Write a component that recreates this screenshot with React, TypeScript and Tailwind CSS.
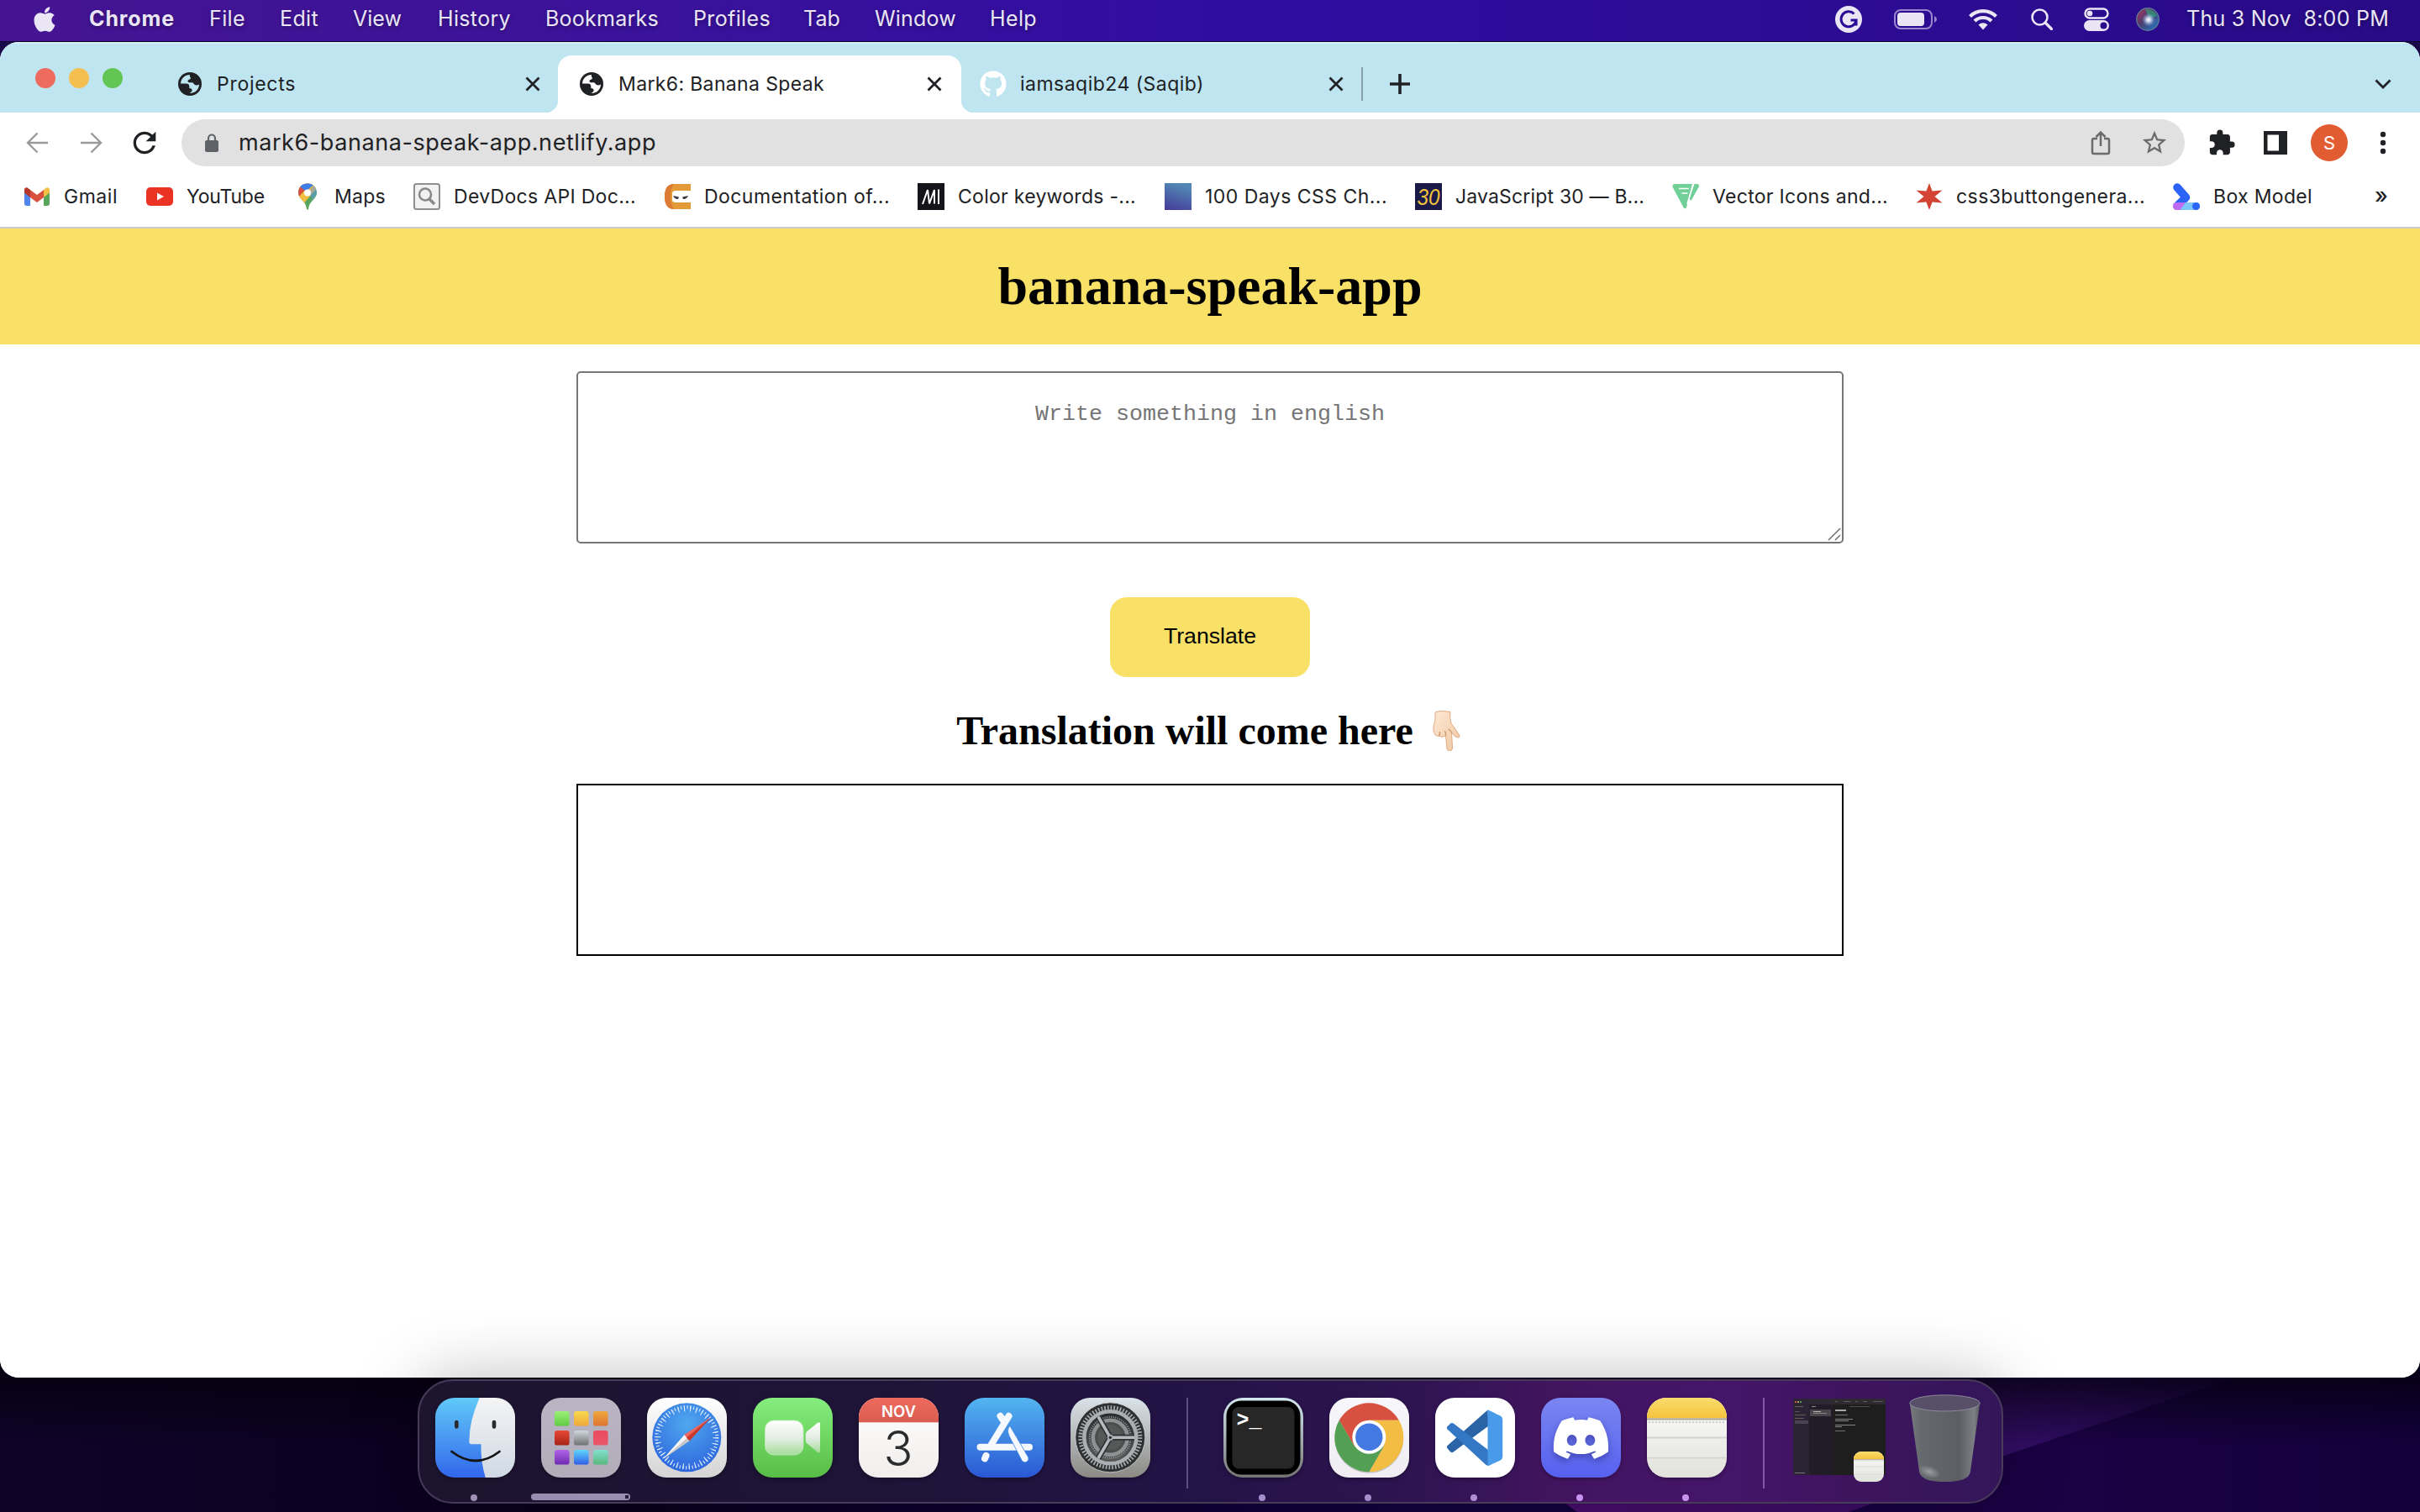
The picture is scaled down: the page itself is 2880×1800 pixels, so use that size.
import { useLayoutEffect, useRef, useState, type ReactNode } from "react";
import { FaApple, FaGithub } from "react-icons/fa";
import { FaDiscord } from "react-icons/fa6";
import { MdStarBorder, MdExtension, MdRefresh } from "react-icons/md";

/* A one-line label whose tracking is adjusted so that it fills its box. */
function Label({ className, children }: { className: string; children: string }) {
  const outer = useRef<HTMLSpanElement>(null);
  const inner = useRef<HTMLSpanElement>(null);
  const [spacing, setSpacing] = useState(0);
  useLayoutEffect(() => {
    if (!outer.current || !inner.current) return;
    const free = outer.current.clientWidth - inner.current.getBoundingClientRect().width;
    setSpacing(free / children.length);
  }, [children]);
  return (
    <span className={"block shrink-0 whitespace-pre " + className}>
      <span ref={outer} className="block w-full">
        <span ref={inner} style={{ letterSpacing: spacing }}>
          {children}
        </span>
      </span>
    </span>
  );
}

/* ---------- Menu bar ---------- */

function MenuBar() {
  return (
    <header className="flex h-[50px] shrink-0 items-start border-b border-[#0b0326] bg-linear-to-r from-[#451492] via-[#300da2] to-[#290a86] font-['Inter',sans-serif] text-[25px] text-[#eae6f5]">
      <div className="flex h-[46px] w-full items-center [text-shadow:0_2px_4px_rgba(0,0,0,0.35)]">
        <FaApple className="ml-[37px] h-[34px] w-[32px] shrink-0" />
        <Label className="ml-[37px] w-[102px] font-bold">Chrome</Label>
        <Label className="ml-[41px] w-[43px]">File</Label>
        <Label className="ml-[41px] w-[46px]">Edit</Label>
        <Label className="ml-[41px] w-[58px]">View</Label>
        <Label className="ml-[43px] w-[87px]">History</Label>
        <Label className="ml-[41px] w-[135px]">Bookmarks</Label>
        <Label className="ml-[41px] w-[92px]">Profiles</Label>
        <Label className="ml-[39px] w-[44px]">Tab</Label>
        <Label className="ml-[41px] w-[97px]">Window</Label>
        <Label className="ml-[40px] w-[56px]">Help</Label>
        <div className="ml-auto flex items-center pr-[37px]">
          <svg className="h-8 w-8" viewBox="0 0 32 32">
            <circle cx="16" cy="16" r="16" fill="#e9e5f4" />
            <path d="M22.5 9.5A9 9 0 1 0 25 17H18.5M25 17v6.500M25 17" fill="none" stroke="#2b0b95" strokeWidth="3" />
          </svg>
          <svg className="ml-[38px] h-[24px] w-[52px]" viewBox="0 0 52 24">
            <rect x="1" y="1" width="44" height="22" rx="7" fill="none" stroke="#9a86cc" strokeWidth="2" />
            <rect x="4" y="4" width="32" height="16" rx="4" fill="#e9e5f4" />
            <path d="M48 8q3 1.500 3 4t-3 4z" fill="#9a86cc" />
          </svg>
          <svg className="ml-[37px] h-[26px] w-[34px]" viewBox="0 0 34 26">
            <g fill="none" stroke="#e9e5f4" strokeWidth="4.200">
              <path d="M1.500 9.500a22 22 0 0 1 31 0" />
              <path d="M7 15a14.500 14.500 0 0 1 20 0" />
            </g>
            <path d="M11.500 19.500a8 8 0 0 1 11 0L17 25.500z" fill="#e9e5f4" />
          </svg>
          <svg className="ml-[40px] h-[26px] w-[26px]" viewBox="0 0 26 26">
            <circle cx="10.500" cy="10.500" r="9" fill="none" stroke="#e9e5f4" strokeWidth="2.600" />
            <path d="M17 17l7.500 7.500" stroke="#e9e5f4" strokeWidth="3.200" strokeLinecap="round" />
          </svg>
          <svg className="ml-[37px] h-[28px] w-[30px]" viewBox="0 0 30 28">
            <rect x="1.500" y="1.500" width="27" height="11" rx="5.500" fill="none" stroke="#e9e5f4" strokeWidth="2.400" />
            <circle cx="7" cy="7" r="3.300" fill="#e9e5f4" />
            <rect x="0" y="15" width="30" height="13" rx="6.500" fill="#e9e5f4" />
            <circle cx="23.500" cy="21.500" r="4" fill="#2a0a8a" />
          </svg>
          <svg className="ml-[32px] h-[28px] w-[28px]" viewBox="0 0 28 28">
            <defs>
              <linearGradient id="siri" x1="0" y1="0" x2="1" y2="1">
                <stop offset="0" stopColor="#b5305a" />
                <stop offset="0.450" stopColor="#4a3f6e" />
                <stop offset="1" stopColor="#1f7fd0" />
              </linearGradient>
              <radialGradient id="siriGlow">
                <stop offset="0" stopColor="#ffffff" />
                <stop offset="0.350" stopColor="#dfe8ff" stopOpacity="0.800" />
                <stop offset="1" stopColor="#7fa0e0" stopOpacity="0" />
              </radialGradient>
            </defs>
            <circle cx="14" cy="14" r="13.300" fill="url(#siri)" stroke="#5c7f96" strokeWidth="1.200" />
            <path d="M11 2q10-1 14 8l-9 3z" fill="#2f9a78" opacity="0.750" />
            <circle cx="15" cy="14.500" r="8" fill="url(#siriGlow)" />
          </svg>
          <Label className="ml-[32px] w-[241px]">{"Thu 3 Nov  8:00 PM"}</Label>
        </div>
      </div>
    </header>
  );
}

/* ---------- Browser chrome ---------- */

function CloseIcon() {
  return (
    <svg className="h-[18px] w-[18px] shrink-0" viewBox="0 0 18 18">
      <path d="M1.500 1.500l15 15M16.500 1.500l-15 15" stroke="#202124" strokeWidth="2.800" />
    </svg>
  );
}

function Globe({ land }: { land: string }) {
  return (
    <svg className="size-[28px] shrink-0" viewBox="0 0 28 28">
      <circle cx="14" cy="14" r="14" fill="#202124" />
      <path
        className={land}
        d="M14 3C8 3 3.300 7.500 3 13.500h6.500c2.500 0 3.800 1.200 3.800 3.300v2.200c2.400 0 3.300 1 3.300 2.500 0 1.600-1.600 2.300-3.100 3.400C20 25.300 25 20.500 25 14.500c-1.800 1-3.500 1.300-5 .500-1.600-.800-1.800-2.700-3.500-2.700h-3.200c-1.600 0-2.300-1.500-1.500-2.700.800-1 2.500-.700 3-2 .5-1.600-1.800-2.300-.800-4.600z"
      />
    </svg>
  );
}

function TabStrip() {
  return (
    <div className="flex h-[84px] shrink-0 items-end border-t-2 border-[#d6f0f7] bg-[#bfe6f0] text-[23px]">
      <div className="flex h-[68px] w-[649px] shrink-0 items-center">
        <div className="mb-[14px] ml-[42px] flex gap-4">
          <span className="size-6 rounded-full bg-[#ed6b5f]" />
          <span className="size-6 rounded-full bg-[#f5bf4f]" />
          <span className="size-6 rounded-full bg-[#62c554]" />
        </div>
        <div className="mr-[18px] ml-[66px]">
          <Globe land="fill-[#bfe6f0]" />
        </div>
        <Label className="w-[94px]">Projects</Label>
        <div className="mr-[6px] ml-auto">
          <CloseIcon />
        </div>
      </div>
      <div className="h-[68px] w-[15px] shrink-0 bg-[radial-gradient(circle_at_0_0,#bfe6f0_15px,#ffffff_15.500px)] bg-[length:15px_15px] bg-bottom bg-no-repeat" />
      <div className="flex h-[68px] w-[480px] shrink-0 items-center rounded-t-[16px] bg-white">
        <div className="mr-[18px] ml-[26px]">
          <Globe land="fill-white" />
        </div>
        <Label className="w-[245px]">Mark6: Banana Speak</Label>
        <div className="mr-[23px] ml-auto">
          <CloseIcon />
        </div>
      </div>
      <div className="h-[68px] w-[15px] shrink-0 bg-[radial-gradient(circle_at_100%_0,#bfe6f0_15px,#ffffff_15.500px)] bg-[length:15px_15px] bg-bottom bg-no-repeat" />
      <div className="flex h-[68px] flex-1 items-center">
        <FaGithub className="ml-[7px] size-8 shrink-0 text-white" />
        <Label className="ml-4 w-[219px]">iamsaqib24 (Saqib)</Label>
        <div className="ml-[148px]">
          <CloseIcon />
        </div>
        <span className="ml-[21px] h-[40px] w-[2px] bg-[#86a1a9]" />
        <svg className="ml-[32px] size-6" viewBox="0 0 24 24">
          <path d="M12 0v24M0 12h24" stroke="#202124" strokeWidth="3.600" />
        </svg>
        <svg className="mr-[34px] ml-auto h-[12px] w-[20px]" viewBox="0 0 20 12">
          <path d="M1.500 1.500l8.500 8.500 8.500-8.500" fill="none" stroke="#202124" strokeWidth="2.800" />
        </svg>
      </div>
    </div>
  );
}

function Toolbar() {
  return (
    <div className="flex h-[72px] shrink-0 items-center">
      <svg className="ml-[31px] h-[26px] w-[27px] shrink-0" viewBox="0 0 27 26">
        <path d="M26 13H2M13.500 1.500L2 13l11.500 11.500" fill="none" stroke="#9a9a9a" strokeWidth="2.400" />
      </svg>
      <svg className="ml-[37px] h-[26px] w-[27px] shrink-0" viewBox="0 0 27 26">
        <path d="M1 13h24M13.500 1.500L25 13 13.500 24.500" fill="none" stroke="#9a9a9a" strokeWidth="2.400" />
      </svg>
      <MdRefresh className="ml-[30px] size-[40px] shrink-0" />
      <div className="ml-[24px] flex h-[56px] w-[2384px] shrink-0 items-center rounded-full bg-[#e1e1e1] text-[27px]">
        <svg className="ml-[28px] h-[22px] w-[16px] shrink-0" viewBox="0 0 16 22">
          <path d="M4 9V5.500a4 4 0 0 1 8 0V9" fill="none" stroke="#5f6368" strokeWidth="2.200" />
          <rect y="8" width="16" height="14" rx="2" fill="#5f6368" />
        </svg>
        <Label className="mt-[1px] ml-[24px] w-[497px]">mark6-banana-speak-app.netlify.app</Label>
        <svg className="ml-auto h-[30px] w-[24px]" viewBox="0 0 24 30">
          <path d="M8 10H4a2 2 0 0 0-2 2v14a2 2 0 0 0 2 2h16a2 2 0 0 0 2-2V12a2 2 0 0 0-2-2h-4M12 19V3M6.500 8L12 2.500 17.500 8" fill="none" stroke="#6b6b6b" strokeWidth="2.500" />
        </svg>
        <MdStarBorder className="mr-[19px] ml-[35px] size-[34px] text-[#6b6b6b]" />
      </div>
      <MdExtension className="ml-[27px] size-[34px] shrink-0" />
      <svg className="ml-[33px] size-[28px] shrink-0" viewBox="0 0 28 28">
        <path fillRule="evenodd" d="M0 0h28v28H0zM4.500 4.500v19H18v-19z" fill="#202124" />
      </svg>
      <span className="ml-[28px] flex size-[44px] shrink-0 items-center justify-center rounded-full bg-[#e25c32] text-[22px] text-white">S</span>
      <svg className="ml-[38px] h-[28px] w-[8px] shrink-0" viewBox="0 0 8 28">
        <circle cx="4" cy="4" r="3.200" fill="#202124" />
        <circle cx="4" cy="14" r="3.200" fill="#202124" />
        <circle cx="4" cy="24" r="3.200" fill="#202124" />
      </svg>
    </div>
  );
}

const icons: Record<string, ReactNode> = {
  gmail: (
    <>
      <path d="M1 8v16a3 3 0 0 0 3 3h4V13z" fill="#4f86ec" />
      <path d="M31 8v16a3 3 0 0 1-3 3h-4V13z" fill="#58a55c" />
      <path d="M24 8l3-2.200c2-1.200 4 0 4 2.200v3.500L24 17z" fill="#f2be42" />
      <path d="M8 8L5 5.800C3 4.600 1 5.800 1 8v3.500L8 17z" fill="#b7362b" />
      <path d="M8 8v9l8 6 8-6V8l-8 6z" fill="#da5040" />
    </>
  ),
  youtube: (
    <>
      <rect y="5" width="32" height="22" rx="5" fill="#ea3323" />
      <path d="M13 11.500v9l8-4.500z" fill="#fff" />
    </>
  ),
  maps: (
    <>
      <clipPath id="pin">
        <path d="M16 .500C9.500.500 5 5 5 11.500c0 7.500 9 9.500 9.800 18.500.2 2 2.200 2 2.400 0C18 21 27 19 27 11.500 27 5 22.500.500 16 .500z" />
      </clipPath>
      <g clipPath="url(#pin)">
        <rect width="32" height="32" fill="#58a55c" />
        <path d="M0 22L20 0h12L10 26z" fill="#f2be42" />
        <path d="M5 0h15L4 18z" fill="#da5040" />
        <path d="M7 4l7 6L22 3 30 0H8z" fill="#3f7ee8" />
        <path d="M16 11L24 2l8 0v6l-10 12z" fill="#5b95ee" opacity="0.500" />
      </g>
      <circle cx="16" cy="11.500" r="4" fill="#fff" />
    </>
  ),
  devdocs: (
    <>
      <rect x="1" y="1" width="30" height="30" rx="2.500" fill="#f2f2f2" stroke="#8f8f8f" strokeWidth="2" />
      <circle cx="14" cy="13.500" r="7" fill="none" stroke="#8a8a8a" strokeWidth="2.600" />
      <path d="M18.500 18.500l6.500 6.500" stroke="#8a8a8a" strokeWidth="3.500" />
    </>
  ),
  ninja: (
    <>
      <path d="M32 1H12C5 1 1 6 1 16s4 15 11 15h20v-8H14q-4 0-4-3.500v-7Q10 9 14 9h18z" fill="#e59a3a" />
      <path d="M12 1C5 1 1 6 1 16s4 15 11 15q-4-6-4-15t4-15z" fill="#dd7a33" />
      <path d="M11 15l7 1.500-1 2.500q-4 .500-6-4zM29 15l-7 1.500 1 2.500q4 .500 6-4z" fill="#3a3a42" />
    </>
  ),
  mdn: (
    <>
      <rect width="32" height="32" fill="#15141a" />
      <path d="M6 25L12 8l2 16.500L20 8v16.500M25 7.500v17.500" fill="none" stroke="#fff" strokeWidth="2" />
    </>
  ),
  days: (
    <>
      <defs>
        <linearGradient id="days" x1="0.300" y1="0" x2="0" y2="1">
          <stop offset="0" stopColor="#5286b4" />
          <stop offset="1" stopColor="#453a98" />
        </linearGradient>
      </defs>
      <rect width="32" height="32" fill="url(#days)" />
    </>
  ),
  thirty: (
    <>
      <rect width="32" height="32" fill="#1b1947" />
      <text x="16" y="26" fontSize="28" fontStyle="italic" fontFamily="Liberation Sans, sans-serif" textAnchor="middle" textLength="27" lengthAdjust="spacingAndGlyphs" fill="#efc23c">
        30
      </text>
    </>
  ),
  vector: (
    <>
      <path d="M3 1H24L17 29q-1.500 2.500-3.500 0L.500 4.500Q0 1 3 1z" fill="#71cf98" />
      <path d="M26.500 1H30q2.500.500 2 3L22.500 21 20 18z" fill="#71cf98" />
      <path d="M8 6.500h12M11.500 12h7M25.500 0L18 25" stroke="#fff" strokeWidth="1.700" />
    </>
  ),
  star: <path d="M16 0l3.600 9.500L31.500 8.500 22.500 16l9 7.500-11.900-1L16 32l-3.600-9.500L.500 23.500l9-7.500-9-7.500 11.900 1z" fill="#d24333" />,
  box: (
    <>
      <path d="M5 5l10.500 12L5 27" fill="none" stroke="#2b63f6" strokeWidth="9.500" strokeLinecap="round" strokeLinejoin="round" />
      <rect y="23" width="32" height="9" rx="4.500" fill="#7cc8f8" />
      <path d="M4.500 23H15l-6.500 9h-4a4.500 4.500 0 0 1 0-9z" fill="#bd6cf2" />
      <circle cx="27.500" cy="27.500" r="4.500" fill="#2b63f6" />
    </>
  ),
};

const bookmarks = [
  { icon: "gmail", label: "Gmail", item: "w-[146px]", text: "w-[64px]" },
  { icon: "youtube", label: "YouTube", item: "w-[176px]", text: "w-[93px]" },
  { icon: "maps", label: "Maps", item: "w-[142px]", text: "w-[61px]" },
  { icon: "devdocs", label: "DevDocs API Doc...", item: "w-[298px]", text: "w-[217px]" },
  { icon: "ninja", label: "Documentation of...", item: "w-[302px]", text: "w-[221px]" },
  { icon: "mdn", label: "Color keywords -...", item: "w-[294px]", text: "w-[212px]" },
  { icon: "days", label: "100 Days CSS Ch...", item: "w-[298px]", text: "w-[217px]" },
  { icon: "thirty", label: "JavaScript 30 — B...", item: "w-[306px]", text: "w-[225px]" },
  { icon: "vector", label: "Vector Icons and...", item: "w-[290px]", text: "w-[209px]" },
  { icon: "star", label: "css3buttongenera...", item: "w-[306px]", text: "w-[225px]" },
  { icon: "box", label: "Box Model", item: "w-[240px]", text: "w-[118px]" },
];

function BookmarksBar() {
  return (
    <div className="flex h-[66px] shrink-0 items-start border-b-2 border-[#cbcbcb] pl-[28px] text-[23px]">
      <div className="flex h-[56px] items-center">
        {bookmarks.map((b) => (
          <div key={b.icon} className={"flex shrink-0 items-center gap-4 " + b.item}>
            <svg className="size-8 shrink-0" viewBox="0 0 32 32">
              {icons[b.icon]}
            </svg>
            <Label className={b.text}>{b.label}</Label>
          </div>
        ))}
        <span className="-mt-[2px] text-[26px] leading-none font-medium">»</span>
      </div>
    </div>
  );
}

/* ---------- Page ---------- */

function PointingHand() {
  return (
    <svg className="h-[48px] w-[48px]" viewBox="0 0 48 48">
      <defs>
        <linearGradient id="skin" x1="0" y1="0" x2="1" y2="1">
          <stop offset="0" stopColor="#fde9d4" />
          <stop offset="1" stopColor="#f0c6a2" />
        </linearGradient>
      </defs>
      <path
        d="M14 2Q19-.500 32 1.500Q31 9 33 15Q38 22 42.500 29Q44 32 41 32Q37 31.500 33.500 26L34.500 45Q34 48 31 48Q28.500 48 28 45L26.500 30Q22 32.500 18.500 30Q14 31 13 26.500Q11.500 24 12 19Q15 11 14 2Z"
        fill="url(#skin)"
        stroke="#dfa980"
        strokeWidth="1"
      />
      <path d="M18.500 30q1.500-2 1-5M26.500 30q.500-3-1-6M33.500 26q-1.500-3-4-4" fill="none" stroke="#cf946a" strokeWidth="1.300" />
    </svg>
  );
}

function BananaPage() {
  return (
    <main className="flex flex-1 flex-col items-center bg-white text-black">
      <h1 className="w-full bg-[#f9e066] py-8 text-center font-['Liberation_Serif',serif] text-[64px] leading-[74px] font-bold">banana-speak-app</h1>
      <div className="relative mt-8 h-[205px] w-[1508px]">
        <textarea
          className="h-full w-full resize-none rounded-[5px] border-2 border-[#767676] p-8 pt-[33px] text-center font-['Liberation_Mono',monospace] text-[26.670px] leading-[32px] placeholder:text-[#757575]"
          placeholder="Write something in english"
        />
        <svg className="absolute right-[3px] bottom-[3px] size-[16px]" viewBox="0 0 16 16">
          <path d="M1 15L15 1M9 15l6-6" stroke="#6e6e6e" strokeWidth="1.500" />
        </svg>
      </div>
      <button className="mt-[64px] h-[95px] w-[238px] rounded-[20px] bg-[#f9e066] pb-[3px] font-['Liberation_Sans',sans-serif] text-[26.670px]">Translate</button>
      <h2 className="mt-[36px] flex h-[56px] items-center gap-[12px] font-['Liberation_Serif',serif] text-[48px] leading-[56px] font-bold">
        Translation will come here
        <PointingHand />
      </h2>
      <div className="mt-[35px] h-[205px] w-[1508px] border-2 border-black" />
    </main>
  );
}

/* ---------- Dock ---------- */

function Svg({ children }: { children: ReactNode }) {
  return (
    <svg className="size-[95px]" viewBox="0 0 95 95">
      {children}
    </svg>
  );
}

function Gradient({ id, from, to }: { id: string; from: string; to: string }) {
  return (
    <linearGradient id={id} x1="0" y1="0" x2="0" y2="1">
      <stop offset="0" stopColor={from} />
      <stop offset="1" stopColor={to} />
    </linearGradient>
  );
}

function Finder() {
  return (
    <Svg>
      <Gradient id="fBlue" from="#60caf8" to="#3267ec" />
      <Gradient id="fWhite" from="#f4f4f5" to="#d0d9e4" />
      <path d="M0 0h60v95H0z" fill="url(#fBlue)" />
      <path d="M52.700 0Q40.500 27 40.300 52q0 3.300 3 3.300h11.200Q54 76 59.700 95H95V0z" fill="url(#fWhite)" />
      <path d="M25.300 29v5.500M70 29v5.500" stroke="#2a2a2c" strokeWidth="4.600" strokeLinecap="round" />
      <path d="M19.500 64Q48 86 76.500 64" fill="none" stroke="#141416" strokeWidth="2.800" strokeLinecap="round" />
    </Svg>
  );
}

const tiles = [
  ["#9df07a", "#5ecb40"],
  ["#f8d84e", "#f0a83a"],
  ["#eea83c", "#dd7433"],
  ["#e84a35", "#a62217"],
  ["#cfd9e0", "#707070"],
  ["#ec4a5e", "#e9566a"],
  ["#b063e6", "#6e2bb0"],
  ["#5fd6fa", "#2f5ee8"],
  ["#84e0d0", "#56b87c"],
];

function Launchpad() {
  return (
    <Svg>
      <Gradient id="lp" from="#b9b5c3" to="#b0acb8" />
      <rect width="95" height="95" fill="url(#lp)" />
      {tiles.map(([from, to], i) => (
        <g key={i}>
          <Gradient id={"tile" + i} from={from} to={to} />
          <rect x={16 + (i % 3) * 23} y={16 + Math.floor(i / 3) * 23} width="17.600" height="17.600" rx="3.200" fill={"url(#tile" + i + ")"} />
        </g>
      ))}
    </Svg>
  );
}

function Safari() {
  return (
    <Svg>
      <Gradient id="sfBg" from="#ffffff" to="#d4d4d4" />
      <radialGradient id="sfBlue" cx="0.500" cy="0.300" r="0.750">
        <stop offset="0" stopColor="#4fa8ee" />
        <stop offset="1" stopColor="#2c62dc" />
      </radialGradient>
      <rect width="95" height="95" fill="url(#sfBg)" />
      <circle cx="47.300" cy="47.300" r="41" fill="url(#sfBlue)" />
      <circle cx="47.300" cy="47.300" r="36" fill="none" stroke="#dcecfb" strokeWidth="4" strokeDasharray="1.100 2.670" />
      <circle cx="47.300" cy="47.300" r="34.500" fill="none" stroke="#dcecfb" strokeWidth="7" strokeDasharray="1.100 6.127" />
      <path d="M19 73L45 43.500l5.500 7z" fill="#f6f6f6" />
      <path d="M19 73l28.500-25 3.500 3z" fill="#c9c9c9" />
      <path d="M76.500 23L44.500 44l3 4z" fill="#f0665a" />
      <path d="M76.500 23L50.500 51.500l-3.500-4z" fill="#c93a2e" />
    </Svg>
  );
}

function FaceTime() {
  return (
    <Svg>
      <Gradient id="ftBg" from="#86ee7e" to="#57bd46" />
      <linearGradient id="ftCam" x1="0" y1="0" x2="0" y2="1">
        <stop offset="0" stopColor="#ffffff" />
        <stop offset="0.550" stopColor="#e0ecdf" />
        <stop offset="1" stopColor="#a4dd9a" />
      </linearGradient>
      <rect width="95" height="95" fill="url(#ftBg)" />
      <rect x="14.500" y="27" width="45.500" height="41" rx="10.500" fill="url(#ftCam)" stroke="#c5edbe" strokeWidth="0.800" />
      <path d="M64.500 40L77 29.800q3-1.800 3 1.500v32q0 3.300-3 1.500L64.500 54.500q-1.700-1.500-1.700-3.500v-7.500q0-2 1.700-3.500z" fill="url(#ftCam)" />
    </Svg>
  );
}

function Calendar() {
  return (
    <Svg>
      <Gradient id="calRed" from="#ef6a5e" to="#d95c50" />
      <Gradient id="calPaper" from="#ffffff" to="#f0eeec" />
      <rect width="95" height="95" fill="url(#calPaper)" />
      <rect width="95" height="29.300" fill="url(#calRed)" />
      <text x="47.500" y="22.800" textAnchor="middle" fontFamily="Inter, sans-serif" fontWeight="600" fontSize="18.500" textLength="41" fill="#fff">
        NOV
      </text>
      <text x="47" y="80.700" textAnchor="middle" fontFamily="Inter, sans-serif" fontWeight="300" fontSize="58" textLength="35" lengthAdjust="spacingAndGlyphs" fill="#2c2c2e">
        3
      </text>
    </Svg>
  );
}

function AppStore() {
  return (
    <Svg>
      <Gradient id="asBg" from="#53b5f0" to="#2a57d4" />
      <rect width="95" height="95" fill="url(#asBg)" />
      <g stroke="#f5f9ff" strokeWidth="8" strokeLinecap="round" fill="none">
        <path d="M42.500 21.800L46 27" />
        <path d="M52.500 21.800L31.500 56" />
        <path d="M25.500 69L24 72.300" />
        <path d="M18.500 58.700H77" />
      </g>
      <path d="M54 33.500q-4.500 4-1 12L68 74.500a4.200 4.200 0 0 0 7.500-4z" fill="#f5f9ff" stroke="#3b80e4" strokeWidth="0.800" />
    </Svg>
  );
}

function Settings() {
  return (
    <Svg>
      <Gradient id="stBg" from="#dae3ea" to="#8b8984" />
      <Gradient id="stDark" from="#26292b" to="#5a5b5b" />
      <rect width="95" height="95" fill="url(#stBg)" />
      <circle cx="47.300" cy="47.300" r="41.500" fill="#2e3031" stroke="#d5d7d8" strokeWidth="0.800" />
      <circle cx="47.300" cy="47.300" r="35.500" fill="none" stroke="#a9adaf" strokeWidth="5" strokeDasharray="1.700 2.018" />
      <circle cx="47.300" cy="47.300" r="31" fill="url(#stDark)" stroke="#a9afb2" strokeWidth="4.500" />
      <circle cx="47.300" cy="47.300" r="24.500" fill="none" stroke="#8f9294" strokeWidth="2" strokeDasharray="1.200 1.366" />
      <circle cx="47.300" cy="47.300" r="20.500" fill="#4c4e4e" stroke="#8e9192" strokeWidth="4.500" />
      <circle cx="47.300" cy="47.300" r="15" fill="#565857" />
      <path d="M47.300 47.300H76M47.300 47.300L33 22.500M47.300 47.300L33 72" stroke="#2f3132" strokeWidth="7" />
      <path d="M47.300 47.300H76M47.300 47.300L33 22.500M47.300 47.300L33 72" stroke="#b4babd" strokeWidth="3.600" />
      <circle cx="47.300" cy="47.300" r="3.600" fill="#a5abae" />
      <circle cx="47.300" cy="47.300" r="1.600" fill="#222" />
    </Svg>
  );
}

function Terminal() {
  return (
    <Svg>
      <Gradient id="tmBg" from="#d3e8ee" to="#757575" />
      <rect width="95" height="95" fill="url(#tmBg)" />
      <rect x="3.500" y="3.500" width="88" height="88" rx="18" fill="#000" />
      <rect x="10.500" y="11" width="74" height="73.500" rx="8" fill="#272727" />
      <text x="15.500" y="33.500" fontFamily="Liberation Mono, monospace" fontWeight="700" fontSize="25" fill="#fff">
        &gt;_
      </text>
    </Svg>
  );
}

function Chrome() {
  return (
    <Svg>
      <Gradient id="crBg" from="#f7f6fa" to="#efedf2" />
      <rect width="95" height="95" fill="url(#crBg)" />
      <circle cx="47.300" cy="48.800" r="41" fill="#000" opacity="0.180" />
      <path d="M11.800 26.800A41 41 0 0 1 82.800 26.800H47.300L29.600 57.500z" fill="#d8503f" />
      <path d="M82.800 26.800A41 41 0 0 1 47.300 88.300L65 57.500 47.300 26.800z" fill="#f2bd42" />
      <path d="M47.300 88.300A41 41 0 0 1 11.800 26.800L29.600 57.500 47.300 60 65 57.500z" fill="#53a055" />
      <circle cx="47.300" cy="46.800" r="20" fill="#fff" />
      <circle cx="47.300" cy="46.800" r="16.200" fill="#4479e2" />
    </Svg>
  );
}

function Code() {
  return (
    <Svg>
      <rect width="95" height="95" fill="#fff" />
      <path d="M62.500 14.500L14.500 57q-1.500 1.500 0 3.200l3.500 4q1.700 1.600 3.700.300L63.500 33.500z" fill="#2a64a6" />
      <path d="M14.500 37.500q-1.500-1.500 0-3.200l3.500-3.500q1.700-1.600 3.700-.300L63.500 62.500v18.500l-3-1z" fill="#3477c4" />
      <path d="M62.500 14.300L77.500 21.500q2.700 1.300 2.700 4.200v44.500q0 2.900-2.700 4.200L62.500 81.500z" fill="#4a9aea" />
    </Svg>
  );
}

function Discord() {
  return (
    <div className="flex size-[95px] items-center justify-center bg-linear-to-b from-[#7b85f1] to-[#5661ef]">
      <FaDiscord className="h-[72px] w-[71px] text-white drop-shadow-[0_4px_4px_rgba(30,30,110,0.450)]" />
    </div>
  );
}

function Notes({ className }: { className: string }) {
  return (
    <svg className={className} viewBox="0 0 95 95">
      <Gradient id="ntTop" from="#fadc6c" to="#f5c33c" />
      <Gradient id="ntPaper" from="#fbfbfa" to="#e2e2dc" />
      <rect width="95" height="95" fill="url(#ntPaper)" />
      <rect width="95" height="24.500" fill="url(#ntTop)" />
      <path d="M0 25.500h95" stroke="#a9a59f" strokeWidth="2.200" />
      <path d="M2 29.200h92" stroke="#c3c3c6" strokeWidth="1.800" strokeDasharray="1.800 2.200" />
      <path d="M0 47.500h95M0 71.600h95" stroke="#d3d3d6" strokeWidth="1.800" />
    </svg>
  );
}

function DockApp({ children, dot }: { children: ReactNode; dot?: string }) {
  return (
    <div className="relative shrink-0">
      <div className="overflow-hidden rounded-[23px] shadow-[0_2px_4px_rgba(0,0,0,0.300)]">{children}</div>
      {dot && <span className={"absolute top-[115px] left-[42px] size-2 rounded-full " + dot} />}
    </div>
  );
}

function MiniWindow() {
  return (
    <div className="relative h-[91px] w-[110px] shrink-0">
      <div className="flex h-full w-full overflow-hidden bg-[#1e1e1e]">
        <div className="w-[19px] bg-[#2b2435] pt-[3px] pl-[2px]">
          <div className="flex gap-[1px]">
            <span className="size-[2px] rounded-full bg-[#ed6b5f]" />
            <span className="size-[2px] rounded-full bg-[#f5bf4f]" />
            <span className="size-[2px] rounded-full bg-[#62c554]" />
          </div>
          <div className="mt-[4px] h-[1px] w-[10px] bg-[#6a5a55]" />
          <div className="mt-[5px] h-[1px] w-[6px] bg-[#575060]" />
          <div className="mt-[3px] h-[1px] w-[13px] bg-[#6a5a55]" />
          <div className="mt-[3px] h-[1px] w-[11px] bg-[#6a5a55]" />
          <div className="mt-[2px] h-[4px] w-[16px] bg-[#4a4352]" />
          <div className="mt-[58px] h-[1px] w-[12px] bg-[#77707f]" />
        </div>
        <div className="w-[28px] bg-[#221c29]">
          <div className="h-[7px] bg-[#2d2833]" />
          <div className="mt-[2px] ml-[3px] h-[1px] w-[5px] bg-[#8a8a8a]" />
          <div className="mt-[3px] ml-[1px] h-[8px] w-[25px] bg-[#48454b] pt-[2px] pl-[4px]">
            <div className="h-[1px] w-[9px] bg-[#b5b5b5]" />
            <div className="mt-[1px] h-[1px] w-[16px] bg-[#858585]" />
          </div>
        </div>
        <div className="flex-1">
          <div className="flex h-[7px] items-center justify-around bg-[#2d2a30]">
            <span className="h-[1px] w-[3px] bg-[#615d66]" />
            <span className="h-[1px] w-[8px] bg-[#615d66]" />
            <span className="h-[1px] w-[3px] bg-[#615d66]" />
            <span className="h-[1px] w-[5px] bg-[#615d66]" />
            <span className="h-[1px] w-[12px] bg-[#615d66]" />
          </div>
          <div className="mx-auto mt-[2px] h-[1px] w-[24px] bg-[#4b4b4b]" />
          <div className="mt-[3px] ml-[3px] h-[2px] w-[13px] bg-[#a8a8a8]" />
          <div className="mt-[4px] ml-[3px] h-[1px] w-[15px] bg-[#707070]" />
          <div className="mt-[4px] ml-[3px] h-[1px] w-[21px] bg-[#858585]" />
          <div className="mt-[1px] ml-[3px] h-[1px] w-[16px] bg-[#858585]" />
          <div className="mt-[4px] ml-[3px] h-[1px] w-[24px] bg-[#858585]" />
          <div className="mt-[1px] ml-[3px] h-[1px] w-[8px] bg-[#858585]" />
          <div className="mt-[4px] ml-[3px] h-[1px] w-[12px] bg-[#707070]" />
        </div>
      </div>
      <Notes className="absolute top-[63px] left-[72px] size-9 rounded-[9px]" />
    </div>
  );
}

function Trash() {
  return (
    <svg className="-mt-[4px] -ml-[3px] h-[105px] w-[85px] shrink-0" viewBox="0 0 85 106" preserveAspectRatio="none">
      <defs>
        <linearGradient id="bin" x1="0" y1="0" x2="1" y2="0">
          <stop offset="0" stopColor="#777b80" />
          <stop offset="0.150" stopColor="#666a6f" />
          <stop offset="0.700" stopColor="#5b5f63" />
          <stop offset="0.920" stopColor="#7c7f84" />
          <stop offset="1" stopColor="#56595e" />
        </linearGradient>
        <radialGradient id="binGlow">
          <stop offset="0" stopColor="#bfc3c6" stopOpacity="0.600" />
          <stop offset="1" stopColor="#bfc3c6" stopOpacity="0" />
        </radialGradient>
      </defs>
      <path d="M.800 10.500L12 92Q13 105 42.500 105T73 92L84.200 10.500z" fill="url(#bin)" />
      <ellipse cx="24" cy="93" rx="14" ry="7" fill="url(#binGlow)" transform="rotate(20 24 93)" />
      <ellipse cx="42.500" cy="10.500" rx="41.700" ry="9.700" fill="#584f68" stroke="#8d8b9b" strokeWidth="1" />
    </svg>
  );
}

function Dock() {
  return (
    <div className="relative mt-[2px] ml-[497px] flex h-[148px] w-[1887px] shrink-0 items-start gap-[31px] rounded-[42px] border-2 border-[#473b59] bg-[linear-gradient(90deg,#1d142f_0%,#1e1438_30%,#241347_50%,#2d1450_62%,#42145f_72%,#45156a_82%,#3f145f_90%,#33165a_100%)] pt-[20px] pl-[19px] shadow-[0_0_80px_rgba(0,0,0,0.270)]">
      <DockApp dot="bg-[#a090b8]">
        <Finder />
      </DockApp>
      <div className="relative shrink-0">
        <DockApp>
          <Launchpad />
        </DockApp>
        <span className="absolute top-[114px] -left-[12px] flex h-2 w-[118px] items-center justify-end rounded-full bg-[#9a8db2] pr-[2px]">
          <span className="size-1 bg-[#2a1c40]" />
        </span>
      </div>
      <DockApp>
        <Safari />
      </DockApp>
      <DockApp>
        <FaceTime />
      </DockApp>
      <DockApp>
        <Calendar />
      </DockApp>
      <DockApp>
        <AppStore />
      </DockApp>
      <DockApp>
        <Settings />
      </DockApp>
      <span className="mr-[11px] ml-[12px] h-[108px] w-[2px] shrink-0 bg-[#5f4e83]" />
      <DockApp dot="bg-[#a48ecb]">
        <Terminal />
      </DockApp>
      <DockApp dot="bg-[#a48ecb]">
        <Chrome />
      </DockApp>
      <DockApp dot="bg-[#ae8fd6]">
        <Code />
      </DockApp>
      <DockApp dot="bg-[#c993ef]">
        <Discord />
      </DockApp>
      <DockApp dot="bg-[#c993ef]">
        <Notes className="size-[95px]" />
      </DockApp>
      <span className="mr-[3px] ml-[12px] h-[108px] w-[2px] shrink-0 bg-[#8656a6]" />
      <div className="mt-[1px]">
        <MiniWindow />
      </div>
      <Trash />
    </div>
  );
}

function Wallpaper() {
  return (
    <svg className="absolute inset-x-0 bottom-0 h-[200px] w-full" viewBox="0 0 2880 200" preserveAspectRatio="none">
      <defs>
        <linearGradient id="wall" x1="0" y1="0" x2="1" y2="0">
          <stop offset="0" stopColor="#0f0329" />
          <stop offset="0.250" stopColor="#0a001c" />
          <stop offset="0.400" stopColor="#0e0030" />
          <stop offset="0.600" stopColor="#140240" />
          <stop offset="0.850" stopColor="#1a0244" />
          <stop offset="1" stopColor="#13003a" />
        </linearGradient>
        <linearGradient id="ridge" x1="1740" y1="0" x2="2660" y2="0" gradientUnits="userSpaceOnUse">
          <stop offset="0" stopColor="#4b0d70" />
          <stop offset="0.400" stopColor="#420d68" />
          <stop offset="0.700" stopColor="#330e66" />
          <stop offset="1" stopColor="#200650" />
        </linearGradient>
        <linearGradient id="shade" x1="0" y1="0" x2="0" y2="1">
          <stop offset="0.180" stopColor="#04000c" stopOpacity="0.780" />
          <stop offset="0.600" stopColor="#04000c" stopOpacity="0" />
        </linearGradient>
      </defs>
      <rect width="2880" height="200" fill="url(#wall)" />
      <path d="M1740 100L1877 200H2200L2385 133 2660 40 2640 0H1740z" fill="url(#ridge)" />
      <rect width="2880" height="200" fill="url(#shade)" />
    </svg>
  );
}

export default function App() {
  return (
    <div className="relative flex h-[1800px] w-[2880px] flex-col overflow-hidden bg-[#1a0a4a]">
      <Wallpaper />
      <MenuBar />
      <section className="relative flex h-[1590px] shrink-0 flex-col overflow-hidden rounded-[22px] bg-white font-['Inter',sans-serif] text-[#202124]">
        <TabStrip />
        <Toolbar />
        <BookmarksBar />
        <BananaPage />
      </section>
      <Dock />
    </div>
  );
}
